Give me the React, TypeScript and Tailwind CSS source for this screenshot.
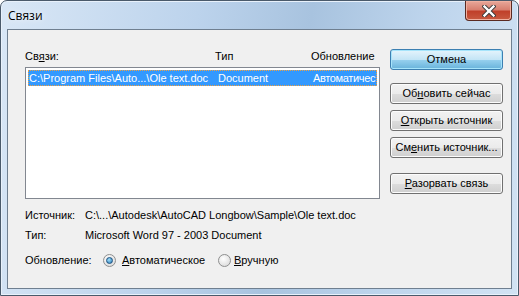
import React from "react";

const font = { fontFamily: '"Liberation Sans", Arial, sans-serif' };

function Btn({ children, primary = false }: { children: React.ReactNode; primary?: boolean }) {
  return (
    <button
      className={`h-[21px] w-[113px] rounded-[3px] border text-[11px] leading-none text-black ${
        primary
          ? "border-[#3c7fb1] bg-[linear-gradient(#e5f4fc_0%,#c4e5f6_50%,#98d1ef_51%,#68b3db_100%)] shadow-[inset_0_0_0_1px_#a6e4fb]"
          : "border-[#707070] bg-[linear-gradient(#f2f2f2_0%,#ebebeb_50%,#dddddd_51%,#cfcfcf_100%)] shadow-[inset_0_0_0_1px_#fcfcfc]"
      }`}
    >
      {children}
    </button>
  );
}

function Radio({ checked }: { checked?: boolean }) {
  return (
    <span className="flex h-[13px] w-[13px] shrink-0 items-center justify-center rounded-full border border-[#8e8f8f] bg-[radial-gradient(circle_at_40%_35%,#ffffff,#d4d4d4)]">
      {checked && (
        <span className="h-[7px] w-[7px] rounded-full border border-[#1c5180] bg-[radial-gradient(circle_at_40%_35%,#9fe0fb,#2a78b4)]" />
      )}
    </span>
  );
}

export default function App() {
  return (
    <div className="h-[296px] w-[519px] bg-white" style={font}>
      <div className="flex h-[296px] w-[519px] flex-col rounded-t-[7px] border border-[#4a5a6b] bg-[linear-gradient(100deg,#d9e7f6_0%,#bcd3ec_35%,#a8c3df_55%,#bdd4ec_75%,#d2e3f4_100%)] shadow-[inset_0_0_0_1px_#e8f1fb]">
        {/* Title bar */}
        <div className="flex h-[28px] shrink-0 items-start justify-between pl-[7px] pr-[6px]">
          <span
            className="mt-[7px] text-[12px] leading-[15px] text-black [text-shadow:0_0_6px_#ffffff]"
            style={{ fontFamily: '"Open Sans", "Noto Sans", sans-serif' }}
          >
            Связи
          </span>
          <div className="flex h-[20px] w-[47px] items-center justify-center rounded-b-[4px] border border-t-0 border-[#5a2a22] bg-[linear-gradient(#e8a89a_0%,#d88070_45%,#c0402a_55%,#c85a40_100%)] shadow-[inset_0_0_0_1px_#f0b0a0]">
            <svg width="14" height="12" viewBox="0 0 14 12">
              <path d="M2.5 1.5 L11.5 10.5 M11.5 1.5 L2.5 10.5" stroke="#3a3a3a" strokeWidth="4.2" strokeLinecap="square" />
              <path d="M2.5 1.5 L11.5 10.5 M11.5 1.5 L2.5 10.5" stroke="#ffffff" strokeWidth="2.4" strokeLinecap="square" />
            </svg>
          </div>
        </div>

        {/* Client area */}
        <div className="mx-[6px] flex h-[260px] flex-col border border-[#6f7f90] bg-[#f0f0f0] text-[11px] leading-[13px] text-black">
          <div className="flex pl-[17px] pt-[19px]">
            <div className="flex w-[355px] flex-col">
              <div className="relative h-[18px]">
                <span className="absolute left-0 top-[1px]">
                  Св<u>я</u>зи:
                </span>
                <span className="absolute left-[190px] top-[1px]">Тип</span>
                <span className="absolute left-[286px] top-[1px]">Обновление</span>
              </div>
              <div className="h-[132px] border border-[#828790] bg-white p-[2px]">
                <div className="flex h-[16px] items-center overflow-hidden whitespace-nowrap border border-dotted border-[#f0a040] bg-[#3399ff] text-white">
                  <span className="w-[189px] shrink-0">C:\Program Files\Auto...\Ole text.doc</span>
                  <span className="w-[95px] shrink-0">Document</span>
                  <span className="shrink-0 tracking-[-0.35px]">Автоматичес</span>
                </div>
              </div>
            </div>
            <div className="ml-[10px] flex flex-col">
              <Btn primary>Отмена</Btn>
              <div className="mt-[13px] flex flex-col gap-[6px]">
                <Btn>
                  Об<u>н</u>овить сейчас
                </Btn>
                <Btn>
                  <u>О</u>ткрыть источник
                </Btn>
                <Btn>
                  См<u>е</u>нить источник...
                </Btn>
              </div>
              <div className="mt-[15px]">
                <Btn>
                  <u>Р</u>азорвать связь
                </Btn>
              </div>
            </div>
          </div>

          <div className="mt-[10px] flex flex-col pl-[17px]">
            <div className="flex h-[13px]">
              <span className="w-[60px]">Источник:</span>
              <span>C:\...\Autodesk\AutoCAD Longbow\Sample\Ole text.doc</span>
            </div>
            <div className="mt-[7px] flex h-[13px]">
              <span className="w-[60px]">Тип:</span>
              <span>Microsoft Word 97 - 2003 Document</span>
            </div>
            <div className="mt-[12px] flex h-[13px] items-center">
              <span className="w-[78px]">Обновление:</span>
              <Radio checked />
              <span className="ml-[6px] w-[96px]">
                <u>А</u>втоматическое
              </span>
              <Radio />
              <span className="ml-[3px]">
                <u>В</u>ручную
              </span>
            </div>
          </div>
        </div>
      </div>
    </div>
  );
}
